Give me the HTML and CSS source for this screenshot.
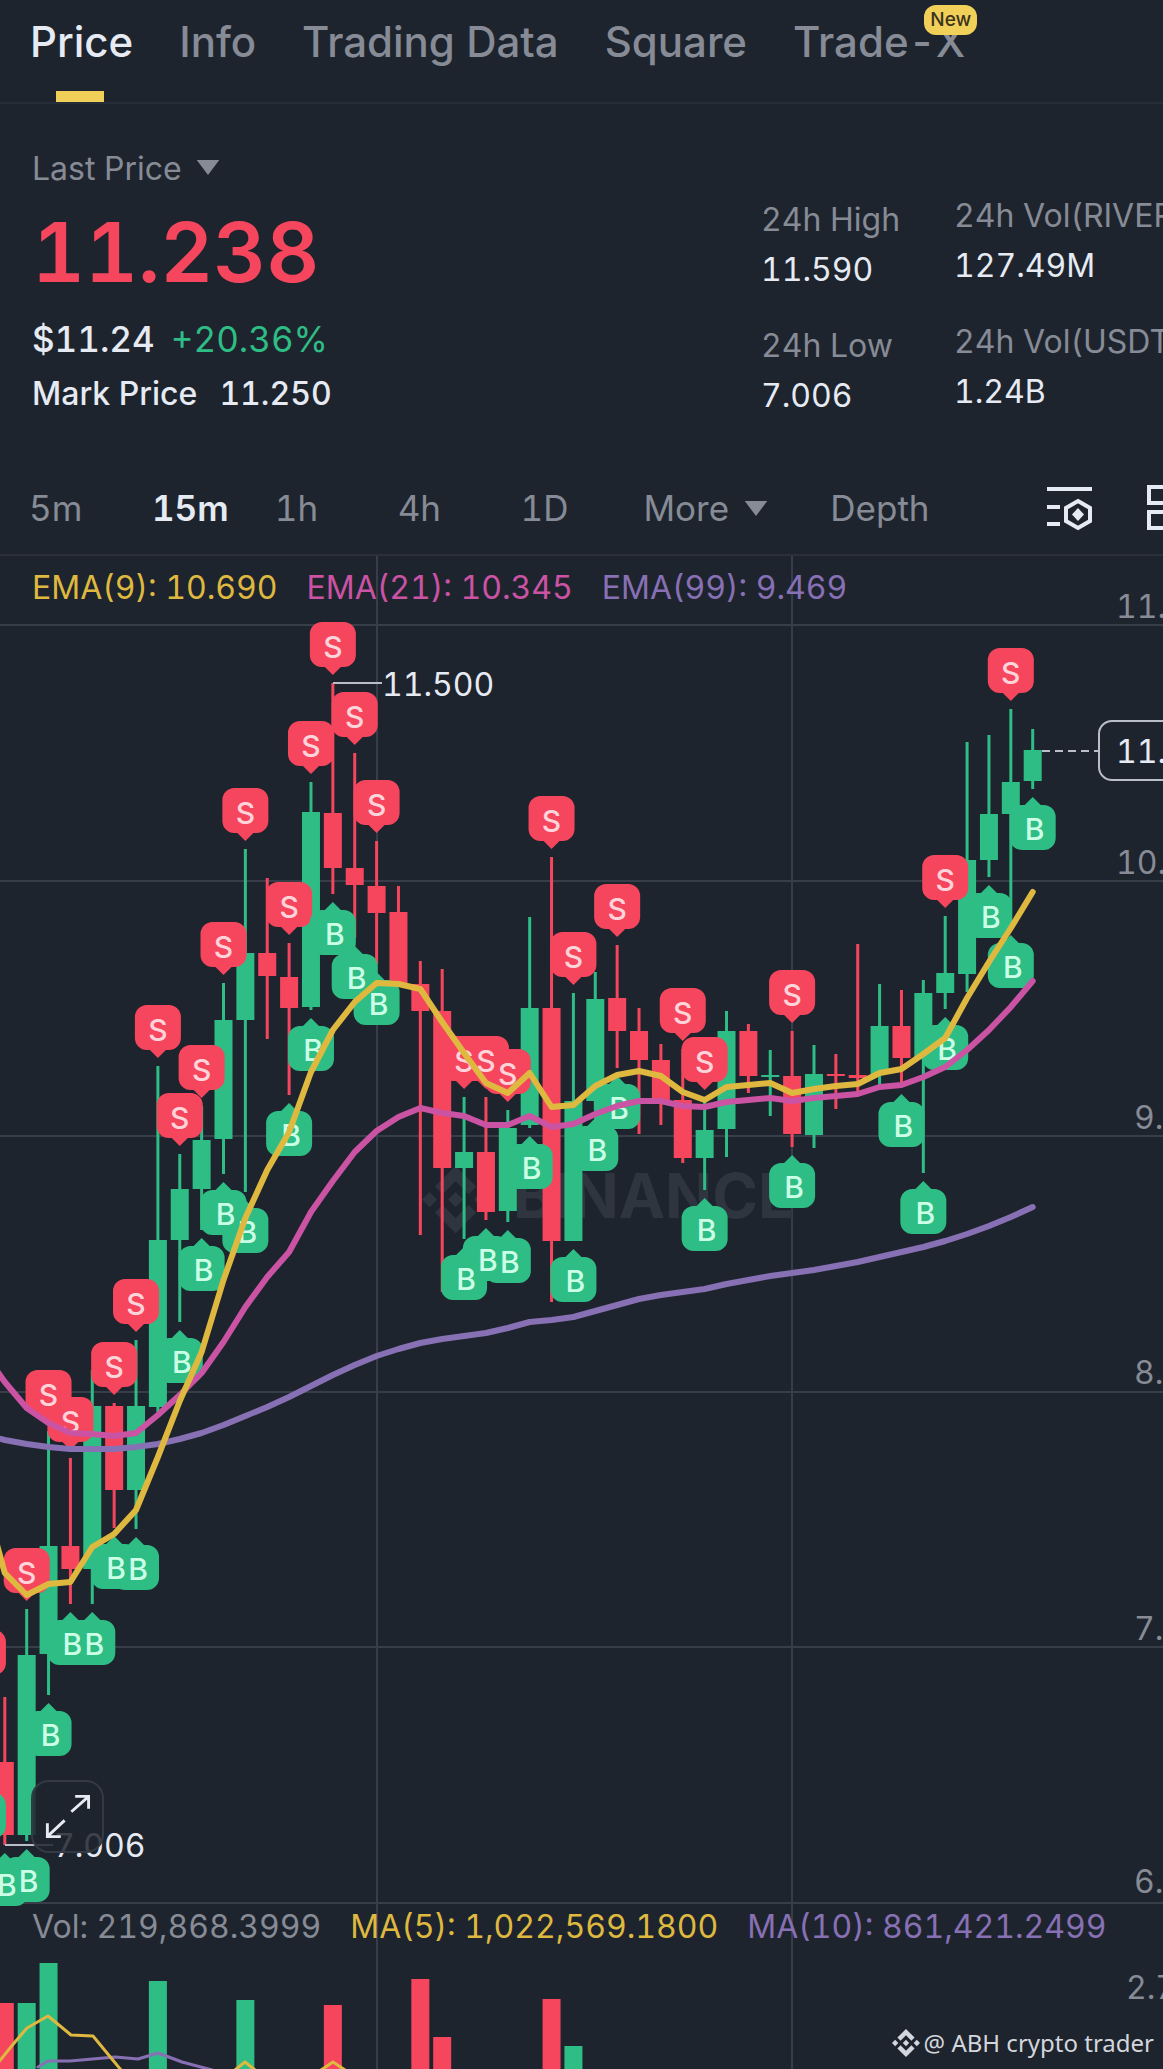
FILE: index.html
```
<!DOCTYPE html>
<html lang="en">
<head>
  <meta charset="utf-8">
  <meta name="viewport" content="width=device-width, initial-scale=1">
  <title>RIVERUSDT 11.238</title>
  <link rel="stylesheet" href="styles.css">
</head>
<body>
  <nav class="tabs" aria-label="Sections">
    <a class="tab tab-active" href="#price" aria-current="page">Price</a>
    <a class="tab" href="#info">Info</a>
    <a class="tab" href="#trading-data">Trading Data</a>
    <a class="tab" href="#square">Square</a>
    <a class="tab" href="#trade-x">Trade-X<span class="tab-badge">New</span></a>
  </nav>

  <main>
    <section class="ticker" aria-label="Ticker">
      <div class="quote">
        <button class="picker" type="button">Last Price
          <svg class="caret" viewBox="0 0 24 16" aria-hidden="true"><path d="M0 0h24L12 16z"/></svg>
        </button>
        <p class="last-price">11.238</p>
        <p class="change"><span>$11.24</span><span class="up">+20.36%</span></p>
        <p class="mark"><span>Mark Price</span><span>11.250</span></p>
      </div>
      <dl class="stats">
        <div><dt>24h High</dt><dd>11.590</dd></div>
        <div><dt>24h Low</dt><dd>7.006</dd></div>
      </dl>
      <dl class="stats stats-volume">
        <div><dt>24h Vol(RIVER)</dt><dd>127.49M</dd></div>
        <div><dt>24h Vol(USDT)</dt><dd>1.24B</dd></div>
      </dl>
    </section>

    <div class="intervals" role="toolbar" aria-label="Chart interval">
      <button type="button">5m</button>
      <button type="button" class="selected">15m</button>
      <button type="button">1h</button>
      <button type="button">4h</button>
      <button type="button">1D</button>
      <button type="button">More
        <svg class="caret" viewBox="0 0 24 16" aria-hidden="true"><path d="M0 0h24L12 16z"/></svg>
      </button>
      <button type="button">Depth</button>
      <button type="button" aria-label="Indicator settings">
        <svg class="tool" viewBox="0 0 46 46" aria-hidden="true">
          <path d="M0 4h45M0 22h13M0 39h13M31 16l12 7v13l-12 7-12-7V23z"/>
          <path class="solid" d="M31 23l6 6.500-6 6.500-6-6.500z"/>
        </svg>
      </button>
      <button type="button" aria-label="Layout">
        <svg class="tool" viewBox="0 0 46 46" aria-hidden="true">
          <path d="M2 2h16v16H2zM27 2h16v16H27zM2 27h16v16H2zM27 27h16v16H27z"/>
        </svg>
      </button>
    </div>

    <section class="chart" aria-label="Price chart">
      <svg id="plot" class="plot" viewBox="0 556 1163 1513" role="img" aria-label="15 minute candles with buy and sell marks">
        <g class="grid">
          <path d="M0 625h1163M0 881h1163M0 1136h1163M0 1392h1163M0 1647h1163M0 1903h1163M377 556v1513M792 556v1513"/>
        </g>
        <g class="brand">
          <path transform="translate(422 1166) scale(2.800)" d="M16.624 13.920l2.718 2.715-7.353 7.353-7.353-7.352 2.717-2.716 4.636 4.660 4.635-4.660zm4.637-4.636L24 12l-2.715 2.716L18.568 12l2.692-2.716zm-9.272 0l2.716 2.692-2.716 2.717L9.272 12l2.716-2.715zm-9.272 0L5.409 12l-2.692 2.692L0 12l2.716-2.716zM11.989.012l7.353 7.329-2.718 2.715-4.635-4.636-4.636 4.660-2.717-2.715z"/>
          <text x="513" y="1218">BINANCE</text>
        </g>
        <g id="volume"></g>
        <g id="candles"></g>
        <g class="callout">
          <path d="M333 683h49M5 1845h48"/>
          <text x="382" y="696">11.500</text>
          <text x="54" y="1857">7.006</text>
        </g>
        <g id="marks"></g>
        <g id="letters"></g>
        <g id="lines"></g>
        <g class="axis">
          <text x="1116" y="618">11.</text>
          <text x="1116" y="874">10.</text>
          <text x="1134" y="1129">9.</text>
          <text x="1134" y="1384">8.</text>
          <text x="1134" y="1640">7.</text>
          <text x="1134" y="1893">6.</text>
          <text x="1126" y="1999">2.7</text>
        </g>
        <g class="current">
          <path class="dash" d="M1042 751h56"/>
          <rect x="1099" y="721" width="120" height="59" rx="13"/>
          <text x="1116" y="763">11.</text>
        </g>
      </svg>

      <div class="legend">
        <span class="yellow">EMA(9): 10.690</span>
        <span class="pink">EMA(21): 10.345</span>
        <span class="purple">EMA(99): 9.469</span>
      </div>
      <div class="legend legend-volume">
        <span>Vol: 219,868.3999</span>
        <span class="yellow">MA(5): 1,022,569.1800</span>
        <span class="purple">MA(10): 861,421.2499</span>
      </div>

      <button class="expand" type="button" aria-label="Full screen">
        <svg viewBox="0 0 72 72" aria-hidden="true">
          <path d="M40 31L57 16M44 15h14v13M33 40L16 56M15 43v14h14"/>
        </svg>
      </button>

      <p class="credit">
        <svg viewBox="0 0 24 24" aria-hidden="true"><path d="M16.624 13.920l2.718 2.715-7.353 7.353-7.353-7.352 2.717-2.716 4.636 4.660 4.635-4.660zm4.637-4.636L24 12l-2.715 2.716L18.568 12l2.692-2.716zm-9.272 0l2.716 2.692-2.716 2.717L9.272 12l2.716-2.715zm-9.272 0L5.409 12l-2.692 2.692L0 12l2.716-2.716zM11.989.012l7.353 7.329-2.718 2.715-4.635-4.636-4.636 4.660-2.717-2.715z"/></svg>
        <span>@ ABH crypto trader</span>
      </p>
    </section>
  </main>
  <script src="chart.js"></script>
</body>
</html>
```
FILE: styles.css
```
:root {
  --bg: #1e242e;
  --line: #383e49;
  --muted: #868b95;
  --text: #e6eaf2;
  --green: #2ebd85;
  --red: #f6465d;
  --yellow: #dfb93f;
  --pink: #cb53a4;
  --purple: #8870b4;
}

* { box-sizing: border-box; }

body {
  margin: 0;
  overflow-x: hidden;
  background: var(--bg);
  color: var(--text);
  font-family: Inter, "Liberation Sans", sans-serif;
  font-size: 32px;
  line-height: 38px;
  font-variant-numeric: tabular-nums;
}

p, dl, dd { margin: 0; }

button {
  padding: 0;
  border: 0;
  background: none;
  color: inherit;
  font: inherit;
  font-variant-numeric: inherit;
  text-align: left;
  white-space: nowrap;
}

.tabs {
  display: flex;
  gap: 46px;
  height: 104px;
  padding: 17px 30px 0;
  border-bottom: 2px solid #272d38;
  font-size: 42px;
  font-weight: 500;
  line-height: 50px;
  white-space: nowrap;
}

.tab {
  position: relative;
  color: var(--muted);
  text-decoration: none;
}

.tab-active { color: var(--text); }

.tab-active::after {
  content: "";
  position: absolute;
  left: 50%;
  bottom: 0;
  width: 48px;
  height: 11px;
  margin-left: -26px;
  background: #f0d058;
}

.tab-badge {
  position: absolute;
  top: -12px;
  right: -12px;
  padding: 0 6px;
  border-radius: 12px;
  background: #f0d058;
  color: #3b3420;
  font-size: 19px;
  line-height: 30px;
}

.ticker {
  display: flex;
  padding: 46px 0 0 32px;
}

.quote {
  display: flex;
  flex: 1;
  flex-direction: column;
  align-items: flex-start;
  gap: 15px;
}

.picker { color: var(--muted); }

.caret {
  width: 24px;
  height: 15px;
  margin-left: 6px;
  vertical-align: 5px;
  fill: var(--muted);
}

.last-price {
  color: var(--red);
  font-size: 82px;
  font-weight: 600;
  line-height: 100px;
}

.change {
  display: flex;
  gap: 16px;
  font-size: 35px;
  font-weight: 500;
  line-height: 42px;
}

.up { color: var(--green); font-weight: 400; }

.mark {
  display: flex;
  gap: 22px;
  font-weight: 500;
}

.stats {
  display: flex;
  flex-direction: column;
  gap: 38px;
  width: 193px;
  padding-top: 51px;
  white-space: nowrap;
}

.stats-volume {
  width: 209px;
  padding-top: 47px;
}

.stats dt {
  margin-bottom: 12px;
  color: var(--muted);
}

.intervals {
  display: grid;
  grid-template-columns: repeat(5, 123fr) 187fr 217fr 100fr 16px;
  height: 139px;
  padding: 70px 0 0 29px;
  color: var(--muted);
  font-size: 35px;
  line-height: 42px;
}

.intervals button {
  min-width: 0;
  height: 46px;
}

.intervals .selected {
  color: var(--text);
  font-weight: 600;
}

.tool {
  display: block;
  width: 46px;
  height: 46px;
  fill: none;
  stroke: var(--text);
  stroke-width: 4;
}

.tool .solid {
  fill: var(--text);
  stroke: none;
}

.chart {
  position: relative;
  overflow: hidden;
  border-top: 2px solid #2b2f3b;
}

.plot {
  display: block;
  width: 100%;
  height: auto;
}

.grid { stroke: var(--line); stroke-width: 2; }

.brand { fill: #2f353f; }
.brand text { font-size: 62px; font-weight: 700; }

.callout path { stroke: #b9bec8; stroke-width: 2; }
.callout text { fill: var(--text); }

.axis { fill: var(--muted); }

.current rect { fill: var(--bg); stroke: #b9bec8; stroke-width: 2; }
.current text { fill: var(--text); }
.dash { stroke: #b9bec8; stroke-width: 2; stroke-dasharray: 8 5; }

.rise { fill: var(--green); }
.fall { fill: var(--red); }

.letter {
  font-size: 30px;
  font-weight: 500;
  text-anchor: middle;
}
.letter-sell { fill: #ffd3da; }
.letter-buy { fill: #cbffe6; }

.average {
  fill: none;
  stroke-width: 6;
  stroke-linecap: round;
  stroke-linejoin: round;
}
.average-thin { stroke-width: 3; }
.average-yellow { stroke: var(--yellow); }
.average-pink { stroke: var(--pink); }
.average-purple { stroke: var(--purple); }

.legend {
  position: absolute;
  top: 13px;
  left: 32px;
  display: flex;
  gap: 29px;
  color: var(--muted);
  white-space: nowrap;
}

.legend-volume { top: auto; bottom: 123px; }

.yellow { color: var(--yellow); }
.pink { color: var(--pink); }
.purple { color: var(--purple); }

.expand {
  position: absolute;
  left: 31px;
  bottom: 216px;
  width: 73px;
  height: 73px;
  border: 2px solid #343943;
  border-radius: 18px;
  background: rgba(30, 36, 46, 0.85);
}

.expand svg {
  display: block;
  fill: none;
  stroke: var(--text);
  stroke-width: 3;
}

.credit {
  position: absolute;
  right: 9px;
  bottom: 8px;
  display: flex;
  align-items: center;
  gap: 4px;
  color: #d3d6dc;
  font-family: "Noto Sans", sans-serif;
  font-size: 24px;
  line-height: 36px;
}

.credit svg {
  width: 28px;
  height: 28px;
  fill: currentColor;
}
```
FILE: chart.js
```
const NS = "http://www.w3.org/2000/svg";
const FIRST = 4.8;
const STEP = 21.87;
const BODY = 18;
const x = (i) => FIRST + STEP * i;

// [high, body top, body bottom, low, direction, marks]
const candles = [
  [1697, 1762, 1835, 1845, "fall", "B"],
  [1609, 1655, 1835, 1841, "rise", "SB"],
  [1431, 1546, 1654, 1695, "rise", "SB"],
  [1458, 1546, 1569, 1604, "fall", "SB"],
  [1370, 1406, 1569, 1604, "rise", "B"],
  [1403, 1406, 1490, 1528, "fall", "SB"],
  [1340, 1406, 1490, 1529, "rise", "SB"],
  [1066, 1240, 1407, 1412, "rise", "S"],
  [1154, 1189, 1240, 1322, "rise", "SB"],
  [1106, 1140, 1189, 1230, "rise", "SB"],
  [983, 1020, 1139, 1174, "rise", "SB"],
  [849, 953, 1020, 1192, "rise", "SB"],
  [878, 953, 976, 1039, "fall", ""],
  [943, 977, 1008, 1095, "fall", "SB"],
  [782, 812, 1007, 1010, "rise", "SB"],
  [683, 813, 868, 894, "fall", "SB"],
  [753, 868, 885, 938, "fall", "SB"],
  [841, 886, 913, 964, "fall", "SB"],
  [886, 912, 984, 984, "fall", ""],
  [961, 984, 1011, 1235, "fall", ""],
  [969, 1011, 1168, 1292, "fall", ""],
  [1097, 1152, 1168, 1239, "rise", "SB"],
  [1097, 1152, 1212, 1220, "fall", "SB"],
  [1110, 1128, 1211, 1222, "rise", "SB"],
  [917, 1008, 1125, 1128, "rise", "B"],
  [857, 1008, 1241, 1302, "fall", "S"],
  [993, 1101, 1241, 1241, "rise", "SB"],
  [972, 999, 1101, 1110, "rise", "B"],
  [945, 998, 1031, 1068, "fall", "SB"],
  [1008, 1031, 1060, 1134, "fall", ""],
  [1044, 1060, 1100, 1125, "fall", ""],
  [1049, 1100, 1158, 1163, "fall", "S"],
  [1098, 1130, 1158, 1190, "rise", "SB"],
  [1011, 1031, 1129, 1157, "rise", ""],
  [1024, 1031, 1076, 1093, "fall", ""],
  [1050, 1075, 1077, 1116, "rise", ""],
  [1031, 1076, 1134, 1147, "fall", "SB"],
  [1045, 1074, 1135, 1148, "rise", ""],
  [1054, 1074, 1076, 1109, "fall", ""],
  [944, 1075, 1078, 1093, "fall", ""],
  [984, 1026, 1074, 1085, "rise", ""],
  [990, 1026, 1058, 1086, "fall", "B"],
  [980, 993, 1059, 1173, "rise", "B"],
  [916, 973, 993, 1009, "rise", "SB"],
  [742, 860, 974, 992, "rise", ""],
  [735, 814, 860, 877, "rise", "B"],
  [709, 782, 814, 927, "rise", "S B"],
  [729, 750, 781, 789, "rise", "B"],
];

// [candle index, bar top, direction]
const volumes = [
  [0, 2003, "fall"], [1, 2003, "rise"], [2, 1963, "rise"], [7, 1981, "rise"],
  [11, 2000, "rise"], [15, 2005, "fall"], [19, 1979, "fall"], [20, 2037, "fall"],
  [25, 1999, "fall"], [26, 2046, "rise"],
];

// Averages hold one value per candle; the entry before the first candle sits at the left edge.
const ema9 = [
  1545, 1573, 1595, 1584, 1582, 1547, 1534, 1510, 1457, 1401, 1352, 1280, 1218, 1170, 1132, 1072,
  1030, 1002, 983, 984, 989, 1022, 1053, 1083, 1093, 1073, 1107, 1105, 1086, 1075, 1071, 1076,
  1092, 1100, 1087, 1085, 1083, 1093, 1089, 1086, 1084, 1073, 1069, 1054, 1038, 998, 962, 928, 892,
];
const ema21 = [
  1371, 1382, 1408, 1423, 1433, 1434, 1436, 1433, 1415, 1395, 1373, 1342, 1307, 1277, 1252, 1212,
  1181, 1152, 1131, 1117, 1108, 1113, 1116, 1125, 1125, 1116, 1127, 1124, 1114, 1106, 1101, 1101,
  1106, 1107, 1102, 1100, 1098, 1101, 1098, 1096, 1094, 1087, 1085, 1077, 1067, 1050, 1030, 1007, 981,
];
const ema99 = [
  1438, 1440, 1444, 1447, 1449, 1449, 1449, 1447, 1444, 1439, 1433, 1425, 1416, 1407, 1397, 1386,
  1375, 1365, 1356, 1349, 1343, 1339, 1336, 1333, 1328, 1322, 1320, 1317, 1311, 1305, 1299, 1295,
  1292, 1289, 1284, 1280, 1276, 1273, 1270, 1266, 1262, 1257, 1252, 1247, 1241, 1234, 1226, 1217, 1207,
];

const layer = (id) => document.getElementById(id);

function add(parent, tag, attributes, text) {
  const node = document.createElementNS(NS, tag);
  for (const [name, value] of Object.entries(attributes)) node.setAttribute(name, value);
  if (text) node.textContent = text;
  parent.append(node);
}

function bar(parent, i, top, bottom, width, kind) {
  add(parent, "rect", { class: kind, x: x(i) - width / 2, y: top, width, height: bottom - top });
}

function sell(i, tip) {
  const c = x(i);
  const d = `M${c} ${tip}l-8 -8h-3a12 12 0 0 1 -12 -12v-21a12 12 0 0 1 12 -12h22a12 12 0 0 1 12 12v21a12 12 0 0 1 -12 12h-3z`;
  add(layer("marks"), "path", { class: "fall", d });
  add(layer("letters"), "text", { class: "letter letter-sell", x: c, y: tip - 17 }, "S");
}

function buy(i, tip) {
  const c = x(i);
  const d = `M${c} ${tip}l8 8h3a12 12 0 0 1 12 12v21a12 12 0 0 1 -12 12h-22a12 12 0 0 1 -12 -12v-21a12 12 0 0 1 12 -12h3z`;
  add(layer("marks"), "path", { class: "rise", d });
  add(layer("letters"), "text", { class: "letter letter-buy", x: c + 2, y: tip + 43 }, "B");
}

function line(points, kind) {
  add(layer("lines"), "polyline", { class: `average ${kind}`, points: points.map((p) => p.join(",")).join(" ") });
}

const average = (values) => values.map((y, n) => [n ? x(n - 1) : -3, y]);

for (const [i, top, kind] of volumes) bar(layer("volume"), i, top, 2069, BODY, kind);

candles.forEach(([high, top, bottom, low, kind], i) => {
  bar(layer("candles"), i, high, low, 3, kind);
  bar(layer("candles"), i, top, bottom, BODY, kind);
});

sell(-1, 1683);
buy(-1, 1785);
candles.forEach(([high, , , low, , marks], i) => {
  if (marks.includes("B")) buy(i, low + 8);
  if (marks.includes("S")) sell(i, high - 8);
});

line(average(ema99), "average-purple");
line(average(ema21), "average-pink");
line(average(ema9), "average-yellow");
line([[38, 2067], [48, 2061], [70, 2061], [115, 2057], [138, 2059], [158, 2053], [182, 2062], [212, 2070]], "average-purple average-thin");
line([[-3, 2064], [15, 2042], [27, 2028], [48, 2016], [71, 2035], [93, 2036], [121, 2070]], "average-yellow average-thin");
line([[235, 2070], [245, 2062], [255, 2070]], "average-yellow average-thin");
line([[321, 2070], [333, 2062], [345, 2070]], "average-yellow average-thin");
```
